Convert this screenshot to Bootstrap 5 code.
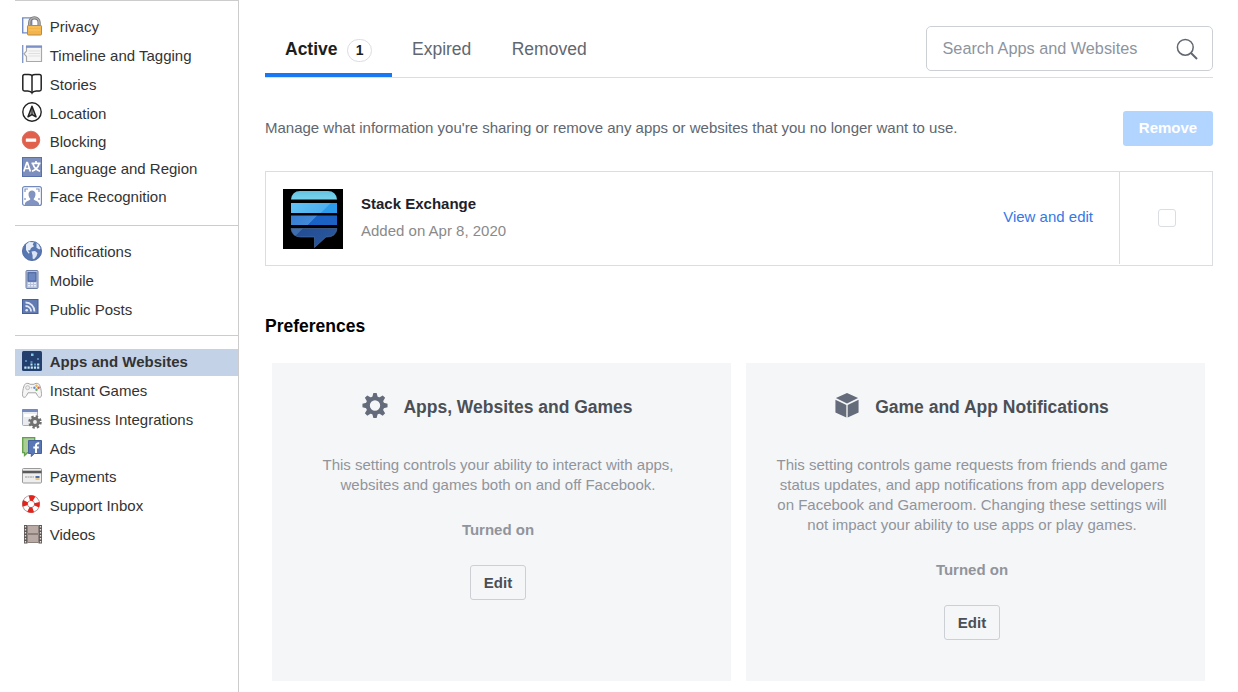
<!DOCTYPE html>
<html lang="en">
<head>
<meta charset="utf-8">
<meta name="viewport" content="width=device-width, initial-scale=1">
<title>Apps and Websites</title>
<link href="https://cdn.jsdelivr.net/npm/bootstrap@5.3.0/dist/css/bootstrap.min.css" rel="stylesheet">
<style>
body{font-family:"Liberation Sans",Arial,sans-serif;font-size:15px;line-height:20px;color:#1d2129;background:#fff;overflow:hidden}
.sidebar{width:239px;border-right:1px solid #ccc;padding-left:15px}
.sidebar ul{border-top:1px solid #ccc;padding-top:13px}
.sidebar .g1{height:225px}
.sidebar .g2{height:110px}
.sidebar li{height:27px;margin-bottom:2px}
.sidebar li.tight{margin-bottom:1px}
.sidebar li.flush{margin-bottom:0}
.sidebar li a{height:27px;padding-left:7px;color:#333;text-decoration:none}
.sidebar li svg{width:20px;height:22px;margin-top:1px;margin-right:7.75px;overflow:visible}
.sidebar li span{line-height:26px;white-space:nowrap}
.sidebar li.current{background:#c4d2e7;font-weight:700}
main{padding:0 25px 0 26px;min-width:0}
.tabs{height:78px;border-bottom:1px solid #dadde1}
.tab-link{height:77px;padding:38px 20px 0;font-size:17.5px;line-height:22px;color:#606770;text-decoration:none}
.tab-link.on{width:127px;color:#1c1e21;font-weight:700;border-bottom:4px solid #1877f2;white-space:nowrap}
.tab-link + .tab-link{padding-right:20.4px}
.count{width:25px;height:23px;margin:1px 0 0 9.6px;border:1px solid #dadde1;border-radius:12px;font-size:14px;line-height:21px}
.search{width:287px;height:45px;margin-top:26px;padding:0 14px 0 15px;border:1px solid #ccd0d5;border-radius:5px}
.search input{width:205px;border:0;padding:0 0 2px .5px;outline:0;font-size:16.25px;line-height:20px;background:none}
.search input::placeholder{color:#8d949e;opacity:1}
.intro{height:35px;margin-top:33px;color:#606770}
.intro span{padding-bottom:2px}
.btn-remove{width:90px;height:35px;padding:0;border:0;border-radius:3px;background:#b2d5ff;color:#fff;font-size:15px;font-weight:700}
.btn-remove:disabled{background:#b2d5ff;color:#fff;opacity:1}
.app-row{height:95px;margin-top:25px;border:1px solid #dadde1}
.app-row .info{padding:0 26px 0 17px}
.app-row .pick{width:93px;height:92px;border-left:1px solid #dadde1}
.app-row .form-check-input{width:18px;height:18px;margin:0 0 1px 2px;border:1px solid #dadde1;border-radius:3px}
.app-text{margin-left:18px;padding-bottom:2px}
.app-name{color:#1d2129;line-height:20px;margin-bottom:7px}
.app-date{color:#8a8a8a}
.edit-link{color:#3578e5;text-decoration:none;margin-top:-3px}
h2{font-size:17.5px;line-height:22px;font-weight:700;color:#000;margin:49px 0 26px}
.prefs{padding:0 8px 0 7px;gap:15px}
.pref{height:318px;background:#f5f6f7;padding:29px 7px 0 0;color:#90949c}
.pref h3{font-size:17.5px;line-height:22px;font-weight:700;color:#4b4f56;margin:0 0 0 14px;padding-top:4px}
.pref .title{height:28px;padding-right:2px}
.pref .title svg{width:28px;height:27px}
.pref p{margin:35px 0 25px}
.btn-edit{width:56px;height:35px;margin-top:25px;padding:0;border:1px solid #ccd0d5;border-radius:3px;background:#f5f6f7;color:#4b4f56;font-size:15px;font-weight:700;line-height:33px}
</style>
</head>
<body>
<div class="d-flex vh-100">
<nav class="sidebar flex-shrink-0">
<ul class="list-unstyled mb-0 g1">
<li><a class="d-flex" href="#"><svg viewBox="0 0 20 22"><path d="M.7 2.900h9v15h-9z" fill="#f8faff" stroke="#758bc3" stroke-width="1.400"/><path d="M7.700 12V7.500a4.700 4.700 0 0 1 9.400 0V12" fill="none" stroke="#777" stroke-width="3.200"/><path d="M7.700 12V7.500a4.700 4.700 0 0 1 9.400 0V12" fill="none" stroke="#b0b0b0" stroke-width="1.600"/><rect x="5.500" y="10.500" width="14" height="9.500" rx=".7" fill="#f3b44c" stroke="#b88a45"/><path d="M6.500 12h12M6.500 15h12" stroke="#f9c866"/></svg><span>Privacy</span></a></li>
<li><a class="d-flex" href="#"><svg viewBox="0 0 20 22"><path d="M.7 1v18" stroke="#8499c8" stroke-width="1.400"/><path d="M4.500 2.500h15v15h-15v-5L2 9.800l2.500-2.700z" fill="#f6f6f7" stroke="#a8a8aa" stroke-width="1.200"/><path d="M4 2.600h16" stroke="#7a90c6" stroke-width="2.400"/><path d="M6.500 7h11.500M6.500 9.500h11.500M6.500 12h11.500" stroke="#dedfe2"/></svg><span>Timeline and Tagging</span></a></li>
<li><a class="d-flex" href="#"><svg viewBox="0 0 20 22" fill="none" stroke="#222" stroke-width="1.500"><path d="M10 2.600C9.200 1.700 8 1.500 6.500 1.500h-4Q.8 1.500.8 3.200v13q0 1.700 1.700 1.700h3.300c2 0 3.400.5 4.200 2.100.8-1.600 2.200-2.100 4.200-2.100h3.300q1.700 0 1.700-1.700v-13q0-1.700-1.700-1.700h-4c-1.500 0-2.700.2-3.500 1.100z"/><path d="M10 2.600v16.600"/></svg><span>Stories</span></a></li>
<li class="tight"><a class="d-flex" href="#"><svg viewBox="0 0 20 22"><circle cx="10" cy="10" r="9.200" fill="#fff" stroke="#222" stroke-width="1.400"/><path d="M10 4.300 6 14.800l4-2.200 4 2.200z" fill="#aaa" stroke="#222" stroke-width="1.500" stroke-linejoin="round"/><path d="M10 5v8" stroke="#222"/></svg><span>Location</span></a></li>
<li class="flush"><a class="d-flex" href="#"><svg viewBox="0 0 20 22"><circle cx="9" cy="10" r="8.800" fill="#e1604c" stroke="#d46555" stroke-width=".8"/><rect x="3.800" y="8.500" width="10.400" height="3.200" rx=".5" fill="#fff"/></svg><span>Blocking</span></a></li>
<li class="tight"><a class="d-flex" href="#"><svg viewBox="0 0 20 22"><rect x=".5" y=".5" width="19" height="19" fill="#7c8fbd" stroke="#5871aa"/><g fill="none" stroke="#fff" stroke-width="1.700"><path d="m1.800 14.500 3-9h.6l3 9M3 11.500h4.500"/><path d="M9.500 6.300h9M14 4v2.300M11 7c1 3.500 3.500 6 7 7.300M17 7c-1 3.500-3.500 6-7 7.300" stroke-width="1.700"/></g></svg><span>Language and Region</span></a></li>
<li><a class="d-flex" href="#"><svg viewBox="0 0 20 22"><rect x=".6" y="1.600" width="18.800" height="18.800" rx="2" fill="#fff" stroke="#7389bb" stroke-width="1.200"/><path d="M3 7V4h3M14 4h3v3M3 13v2M17 13v2" fill="none" stroke="#8194bf" stroke-width="1.200"/><path d="M6.500 9c0-4.700 7-4.700 7 0 0 2.300-.8 3.900-1.900 5 .3 1.700 4.400 1.800 5.400 4.200v2.200H3v-2.200c1-2.400 5.100-2.500 5.400-4.200C7.300 12.900 6.500 11.300 6.500 9z" fill="#8093c1"/></svg><span>Face Recognition</span></a></li>
</ul>
<ul class="list-unstyled mb-0 g2">
<li><a class="d-flex" href="#"><svg viewBox="0 0 20 22"><circle cx="10" cy="11" r="9.600" fill="#5877b2" stroke="#46629c" stroke-width=".8"/><path d="M4 4.500 7 2l5 .2-1.300 2.300 1.300 1.800-3 1.700-1 2.200-2.200.3 2 2.500-1.400.5L4 10z" fill="#e6edf8"/><path d="m14.500 3 2 1.500 2 4-1.200 1-2.800-1.800zM9.500 11.500l3.500-.5 2.500 2-1 3.200-2.500 3-1.400-.7v-3z" fill="#dce5f4"/></svg><span>Notifications</span></a></li>
<li><a class="d-flex" href="#"><svg viewBox="0 0 20 22"><rect x="4" y="1.500" width="12" height="18" rx="1" fill="#b7c3dd" stroke="#6d7fa6"/><rect x="6" y="3.700" width="8" height="8.500" fill="#6c86bf" stroke="#455f99"/><path d="M6 14.200h8M6 16.800h8" stroke="#e8edf6" stroke-width="1.500" stroke-dasharray="2 1"/></svg><span>Mobile</span></a></li>
<li><a class="d-flex" href="#"><svg viewBox="0 0 20 22"><rect x=".5" y="1.500" width="15.500" height="14" fill="#627bb2" stroke="#455f9a"/><g fill="none" stroke="#e4eaf5" stroke-width="1.800"><path d="M3.500 4.500c5 0 9 3.800 9 9M3.500 8c3.200 0 5.600 2.400 5.600 5.500"/></g><circle cx="4.700" cy="12.200" r="1.300" fill="#e4eaf5"/></svg><span>Public Posts</span></a></li>
</ul>
<ul class="list-unstyled mb-0">
<li class="current"><a class="d-flex" href="#"><svg viewBox="0 0 20 22"><rect y="1" width="20" height="20" rx="1.500" fill="#233f6d"/><path d="M9 3.500h2.500V6H9z" fill="#79cce8"/><path d="M15 8h2v2h-2zM3 10h2v2H3zM8.500 11h2v2h-2z" fill="#5488b7"/><path d="M2.300 16.500h2.200v2.200H2.300zM5.500 16.500h2.200v2.200H5.500zM8.700 16.500h2.200v2.200H8.700zM11.900 16.500h2.200v2.200h-2.200zM15.100 16.500h2.200v2.200h-2.200zM8.500 13.500h2v2h-2zM15.100 13.500h2.200v2h-2.200z" fill="#c3e9f5"/><path d="M12 13.500h2v2h-2z" fill="#5b9fcb"/></svg><span>Apps and Websites</span></a></li>
<li><a class="d-flex" href="#"><svg viewBox="0 0 20 22"><path d="M3.500 4.800C5 4 7 4.200 8 5.300h4c1-1.100 3-1.300 4.500-.5 2 1.500 3 7.500 3 11 0 3.500-3 3-4 .8l-1.500-2.800H6L4.500 16.600c-1 2.200-4 2.700-4-.8 0-3.500 1-9.500 3-11z" fill="#f5f5f5" stroke="#a5a5a5"/><circle cx="5.600" cy="8.700" r="2" fill="#eee" stroke="#aaa" stroke-width=".7"/><circle cx="14.500" cy="6.800" r="1.200" fill="#efb344"/><circle cx="14.500" cy="10.800" r="1.200" fill="#67aa67"/><circle cx="12.400" cy="8.700" r="1.200" fill="#5e8bd0"/><circle cx="16.600" cy="8.700" r="1.200" fill="#db5f4b"/><circle cx="9.500" cy="8.700" r=".8" fill="#bbb"/></svg><span>Instant Games</span></a></li>
<li><a class="d-flex" href="#"><svg viewBox="0 0 20 22"><rect x=".5" y="1.500" width="15" height="16" rx="1" fill="#e9ebef" stroke="#a5adb9"/><path d="M0 4V2q0-1 1-1h14q1 0 1 1v2H0z" fill="#7189bf"/><path d="M2 6h12v3H2z" fill="#fff"/><circle cx="13" cy="14" r="5.500" fill="none" stroke="#707070" stroke-width="2.500" stroke-dasharray="2.300 2.020"/><circle cx="13" cy="14" r="3.400" fill="#eee" stroke="#707070" stroke-width="3"/></svg><span>Business Integrations</span></a></li>
<li class="tight"><a class="d-flex" href="#"><svg viewBox="0 0 20 22"><path d="M.7.700h12v15H5.500L2.500 18.500v-2.800H.7z" fill="#a9cf93" stroke="#629f4b" stroke-width="1.300"/><path d="M6.500 3.500h13v13h-7.200l-3 3v-3H6.500z" fill="#5977b4" stroke="#46619b"/><path d="M14 16V8.500q0-2.500 3.200-2.200M11.300 10.500h5.500" fill="none" stroke="#fff" stroke-width="2"/></svg><span>Ads</span></a></li>
<li><a class="d-flex" href="#"><svg viewBox="0 0 20 22"><rect x=".5" y="3.500" width="19" height="14.500" rx="1" fill="#eee" stroke="#999"/><path d="M.5 7h19" stroke="#5a5a5a" stroke-width="2.600"/><path d="M3 12h9" stroke="#999" stroke-width="1.200" stroke-dasharray="2 .5"/><path d="M13.500 11h4v2h-4z" fill="#4d6eac"/><path d="M13.500 13.300h4v1.500h-4z" fill="#e5b858"/></svg><span>Payments</span></a></li>
<li><a class="d-flex" href="#"><svg viewBox="0 0 20 22"><circle cx="9" cy="10" r="6" fill="none" stroke="#a08c8c" stroke-width="6"/><circle cx="9" cy="10" r="6" fill="none" stroke="#fff" stroke-width="4.500"/><circle cx="9" cy="10" r="6" fill="none" stroke="#e2231b" stroke-width="5.400" stroke-dasharray="4.912 4.513" stroke-dashoffset="2.456"/></svg><span>Support Inbox</span></a></li>
<li><a class="d-flex" href="#"><svg viewBox="0 0 20 22"><path d="M2 2h3.500v18.500H2zM16.500 2H20v18.500h-3.500z" fill="#5d5755"/><path d="M5.500 2.500h11v8h-11zM5.500 11.500h11v8h-11z" fill="#b9aaa5" stroke="#8b807c"/><path d="M3.500 3v17M18.500 3v17" stroke="#e5e0dd" stroke-width="1.300" stroke-dasharray="1.500 1.500"/></svg><span>Videos</span></a></li>
</ul>
</nav>
<main class="flex-grow-1">
<header class="tabs d-flex justify-content-between">
<nav class="d-flex">
<a class="tab-link on d-flex" href="#">Active<span class="count text-center flex-shrink-0">1</span></a>
<a class="tab-link" href="#">Expired</a>
<a class="tab-link" href="#">Removed</a>
</nav>
<div class="search d-flex align-items-center justify-content-between"><input type="text" placeholder="Search Apps and Websites" aria-label="Search Apps and Websites"><svg width="22" height="22" viewBox="0 0 22 22" fill="none" stroke="#606770"><circle cx="9.300" cy="9.300" r="7.900" stroke-width="1.500"/><path d="m15 15 6 6" stroke-width="2"/></svg></div>
</header>
<div class="intro d-flex align-items-center justify-content-between"><span>Manage what information you're sharing or remove any apps or websites that you no longer want to use.</span><button class="btn btn-remove" disabled>Remove</button></div>
<section class="app-row d-flex">
<div class="info d-flex align-items-center flex-grow-1">
<svg class="flex-shrink-0" width="60" height="60" viewBox="0 0 60 60"><defs><linearGradient id="aqua" x2="0" y2="1"><stop stop-color="#65c2df"/><stop offset="1" stop-color="#79d5ed"/></linearGradient><linearGradient id="sky" gradientUnits="userSpaceOnUse" x1="0" y1="0" x2="60" y2="60"><stop offset=".2" stop-color="#63c3f5"/><stop offset=".51" stop-color="#4dafee"/><stop offset=".52" stop-color="#2b9bea"/><stop offset="1" stop-color="#329fe9"/></linearGradient><linearGradient id="royal" gradientUnits="userSpaceOnUse" x1="0" y1="0" x2="60" y2="60"><stop offset=".25" stop-color="#3579cf"/><stop offset=".5" stop-color="#4289d9"/><stop offset=".51" stop-color="#1862c6"/><stop offset="1" stop-color="#2360bd"/></linearGradient><linearGradient id="deep" gradientUnits="userSpaceOnUse" x1="0" y1="0" x2="60" y2="60"><stop offset=".49" stop-color="#3d6dae"/><stop offset=".5" stop-color="#234e95"/><stop offset="1" stop-color="#2c599f"/></linearGradient></defs><path d="M0 0h60v60H0z"/><path d="M8 10.500Q9 2 17 2h28q8 0 9 8.500z" fill="url(#aqua)"/><path d="M8 14h46v10H8z" fill="url(#sky)"/><path d="M8 26.500h46V36H8z" fill="url(#royal)"/><path d="M8 39.500h46q-1 8.500-10 8.500h-1L31.500 58.500V48H18Q9 48 8 39.500z" fill="url(#deep)" stroke="#5275a6" stroke-width=".6"/></svg>
<div class="flex-grow-1 app-text"><div class="app-name fw-bold">Stack Exchange</div><div class="app-date">Added on Apr 8, 2020</div></div>
<a class="edit-link" href="#">View and edit</a>
</div>
<div class="pick d-flex align-items-center justify-content-center"><input class="form-check-input" type="checkbox" aria-label="Select Stack Exchange"></div>
</section>
<h2>Preferences</h2>
<section class="prefs d-flex">
<div class="pref text-center flex-fill w-50">
<div class="title d-flex justify-content-center"><svg viewBox="0 0 28 28"><g fill="#646b7b"><path d="M12.300 1h3.400l1.300 5h-6zM12.300 27h3.400l1.300-5h-6z"/><path d="M1 12.300v3.400L6 17v-6zM27 12.300v3.400L22 17v-6z"/><path d="m3.500 6 2.500-2.500 4.500 2.700-4.300 4.300zM22 3.500 24.500 6l-2.700 4.500-4.300-4.300zM24.500 22 22 24.500l-4.500-2.700 4.300-4.300zM6 24.500 3.500 22l2.700-4.500 4.300 4.300z"/></g><circle cx="14" cy="14" r="7.500" fill="#f5f6f7" stroke="#646b7b" stroke-width="4.300"/></svg><h3>Apps, Websites and Games</h3></div>
<p>This setting controls your ability to interact with apps,<br>websites and games both on and off Facebook.</p>
<div class="fw-bold">Turned on</div>
<button class="btn btn-edit">Edit</button>
</div>
<div class="pref text-center flex-fill w-50">
<div class="title d-flex justify-content-center"><svg viewBox="0 0 28 28" fill="#646b7b"><path d="M14 1 25.500 6.300 14 12 2.500 6.300zM2 8l11.300 5.500V26.500L2 21.200zM26 8l-11.300 5.500V26.500L26 21.200z"/></svg><h3>Game and App Notifications</h3></div>
<p>This setting controls game requests from friends and game<br>status updates, and app notifications from app developers<br>on Facebook and Gameroom. Changing these settings will<br>not impact your ability to use apps or play games.</p>
<div class="fw-bold">Turned on</div>
<button class="btn btn-edit">Edit</button>
</div>
</section>
</main>
</div>
<script src="https://cdn.jsdelivr.net/npm/bootstrap@5.3.0/dist/js/bootstrap.bundle.min.js"></script>
</body>
</html>
